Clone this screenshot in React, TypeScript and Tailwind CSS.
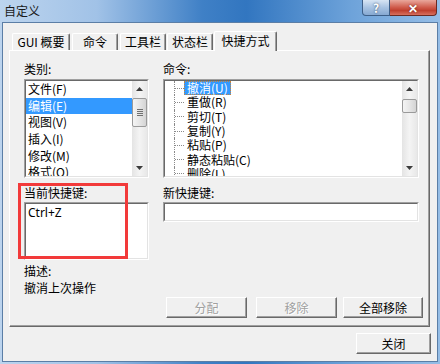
import React from "react";

const categories = ["文件(F)", "编辑(E)", "视图(V)", "插入(I)", "修改(M)", "格式(O)"];
const commands = ["撤消(U)", "重做(R)", "剪切(T)", "复制(Y)", "粘贴(P)", "静态粘贴(C)", "删除(L)"];

const ArrowUp = () => (
  <svg width="7" height="4" viewBox="0 0 7 4">
    <polygon points="3.5,0 7,4 0,4" fill="#3c3c3c" />
  </svg>
);

const ArrowDown = () => (
  <svg width="7" height="4" viewBox="0 0 7 4">
    <polygon points="0,0 7,0 3.5,4" fill="#3c3c3c" />
  </svg>
);

const ScrollBar = ({ thumb, grip }: { thumb: string; grip?: boolean }) => (
  <div className="w-[15px] h-full flex flex-col bg-[linear-gradient(90deg,#e4e4e4,#f4f4f4_50%,#e8e8e8)]">
    <div className="h-[16px] flex items-center justify-center">
      <ArrowUp />
    </div>
    <div className="flex-1">
      <div
        className={`${thumb} rounded-[2px] border border-[#9a9a9a] bg-[linear-gradient(90deg,#f4f4f4,#e6e6e6_50%,#d4d4d4)] flex flex-col items-center justify-center gap-[1px]`}
      >
        {grip && (
          <>
            <div className="w-[6px] h-[1px] bg-[#707070]" />
            <div className="w-[6px] h-[1px] bg-[#707070]" />
            <div className="w-[6px] h-[1px] bg-[#707070]" />
            <div className="w-[6px] h-[1px] bg-[#707070]" />
          </>
        )}
      </div>
    </div>
    <div className="h-[16px] flex items-center justify-center">
      <ArrowDown />
    </div>
  </div>
);

// sunken 3D box used for list boxes and edit fields
const Sunken = ({ className, children }: { className: string; children?: React.ReactNode }) => (
  <div className={`${className} border border-t-[#a0a0a0] border-l-[#a0a0a0] border-r-white border-b-white`}>
    <div className="h-full border border-t-[#696969] border-l-[#696969] border-r-[#e3e3e3] border-b-[#e3e3e3] bg-white overflow-hidden">
      {children}
    </div>
  </div>
);

const Button = ({ label, className, disabled }: { label: string; className: string; disabled?: boolean }) => (
  <div
    className={`${className} h-[21px] flex items-center justify-center text-[12px] border border-t-white border-l-white border-r-[#696969] border-b-[#696969] shadow-[inset_-1px_-1px_0_#a0a0a0] bg-[#f0f0f0] ${
      disabled ? "text-[#a0a0a0] [text-shadow:1px_1px_0_#ffffff]" : "text-black"
    }`}
  >
    {label}
  </div>
);

const App = () => {
  return (
    <div className="w-[440px] h-[364px] flex flex-col bg-[linear-gradient(90deg,#bcd4ee_0%,#a1c2e7_22%,#3f80c6_46%,#3276c0_56%,#6ea3da_80%,#95bde6_100%)] font-['Noto_Sans_CJK_SC',sans-serif] text-[12px] text-black">
      {/* title bar */}
      <div className="h-[22px] flex items-start">
        <div className="pl-[4px] pt-[3px] leading-[16px] text-[12px] text-[#1a1a1a]">自定义</div>
        <div className="ml-auto mr-[3px] flex">
          <div className="w-[28px] h-[16px] rounded-bl-[4px] border border-t-0 border-[#3d5f88] bg-[linear-gradient(180deg,#d7e5f4,#a8c3e2_50%,#86a9d2)] flex items-center justify-center text-white font-bold text-[12px] leading-none [text-shadow:0_0_2px_#2a3e5a]">
            ?
          </div>
          <div className="w-[47px] h-[16px] rounded-br-[4px] border border-t-0 border-l-0 border-[#6b2a22] bg-[linear-gradient(180deg,#e9a89c,#cf5a4a_50%,#c0402f_70%,#d7705f)] flex items-center justify-center text-white font-bold text-[12px] leading-none [text-shadow:0_0_2px_#5a1a10]">
            ✕
          </div>
        </div>
      </div>

      {/* client area */}
      <div className="mx-[2px] mb-[2px] flex-1 bg-[#f0f0f0] border border-[#5b7ea6] flex flex-col">
        {/* tabs */}
        <div className="mt-[8px] h-[19px] flex items-end">
          <div className="ml-[9px] w-[58px] h-[17px] border border-b-0 border-t-white border-l-white border-r-[#696969] shadow-[inset_-1px_0_0_#a0a0a0] rounded-t-[2px] flex items-center justify-center leading-none">
            GUI 概要
          </div>
          <div className="ml-[2px] w-[46px] h-[17px] border border-b-0 border-t-white border-l-white border-r-[#696969] shadow-[inset_-1px_0_0_#a0a0a0] rounded-t-[2px] flex items-center justify-center leading-none">
            命令
          </div>
          <div className="ml-[2px] w-[46px] h-[17px] border border-b-0 border-t-white border-l-white border-r-[#696969] shadow-[inset_-1px_0_0_#a0a0a0] rounded-t-[2px] flex items-center justify-center leading-none">
            工具栏
          </div>
          <div className="ml-[1px] w-[46px] h-[17px] border border-b-0 border-t-white border-l-white border-r-[#696969] shadow-[inset_-1px_0_0_#a0a0a0] rounded-t-[2px] flex items-center justify-center leading-none">
            状态栏
          </div>
          <div className="relative z-10 -mb-[1px] ml-[1px] w-[63px] h-[20px] bg-[#f0f0f0] border border-b-0 border-t-white border-l-white border-r-[#696969] shadow-[inset_-1px_0_0_#a0a0a0] rounded-t-[2px] flex items-center justify-center leading-none pb-[2px]">
            快捷方式
          </div>
        </div>

        {/* tab page */}
        <div className="relative ml-[6px] w-[421px] h-[277px] border border-t-white border-l-white border-r-[#696969] border-b-[#696969] shadow-[inset_-1px_-1px_0_#a0a0a0] pl-[14px] pt-[10px] flex flex-col">
          <div className="flex gap-[14px]">
            <div className="w-[125px]">
              <div className="h-[16px] leading-[16px]">类别:</div>
              <Sunken className="mt-[2px] h-[99px]">
                <div className="flex h-full">
                  <div className="flex-1 overflow-hidden">
                    {categories.map((c, i) => (
                      <div
                        key={c}
                        className={`h-[16.67px] leading-[16.67px] pl-[2px] whitespace-nowrap ${
                          i === 1 ? "bg-[#3399ff] text-white" : ""
                        }`}
                      >
                        {c}
                      </div>
                    ))}
                  </div>
                  <ScrollBar thumb="mt-[1px] h-[29px]" grip />
                </div>
              </Sunken>
            </div>
            <div className="w-[256px]">
              <div className="h-[16px] leading-[16px]">命令:</div>
              <Sunken className="mt-[2px] h-[99px]">
                <div className="flex h-full">
                  <div className="flex-1 overflow-hidden pl-[9px]">
                    {commands.map((c, i) => (
                      <div key={c} className="h-[14.3px] flex items-stretch">
                        <div className="w-[10px] border-l border-dotted border-[#8a8a8a] flex items-center">
                          <div className="w-full border-t border-dotted border-[#8a8a8a]" />
                        </div>
                        <div
                          className={`flex items-center px-[2px] leading-none whitespace-nowrap ${
                            i === 0
                              ? "bg-[#3399ff] text-white border border-dotted border-[#c8843a]"
                              : "border border-transparent"
                          }`}
                        >
                          {c}
                        </div>
                      </div>
                    ))}
                  </div>
                  <ScrollBar thumb="mt-[2px] h-[14px]" />
                </div>
              </Sunken>
            </div>
          </div>

          <div className="mt-[7px] flex gap-[14px]">
            <div className="w-[125px]">
              <div className="h-[16px] leading-[16px]">当前快捷键:</div>
              <Sunken className="mt-[1px] h-[58px]">
                <div className="pl-[2px] pt-[1px] leading-[16px] font-['Noto_Sans',sans-serif]">Ctrl+Z</div>
              </Sunken>
            </div>
            <div className="w-[256px]">
              <div className="h-[16px] leading-[16px]">新快捷键:</div>
              <Sunken className="mt-[1px] h-[20px]" />
            </div>
          </div>

          <div className="mt-[2px] leading-[17px]">描述:</div>
          <div className="leading-[17px]">撤消上次操作</div>

          <div className="mt-[1px] flex">
            <Button label="分配" className="ml-[142px] w-[81px]" disabled />
            <Button label="移除" className="ml-[9px] w-[81px]" disabled />
            <Button label="全部移除" className="ml-[6px] w-[80px]" />
          </div>

          {/* red annotation frame */}
          <div className="absolute left-[8px] top-[132px] w-[110px] h-[76px] border-[3px] border-[#f23a3a]" />
        </div>

        <div className="mt-[6px] flex justify-end mr-[6px]">
          <Button label="关闭" className="w-[75px]" />
        </div>
      </div>
    </div>
  );
};

export default App;
